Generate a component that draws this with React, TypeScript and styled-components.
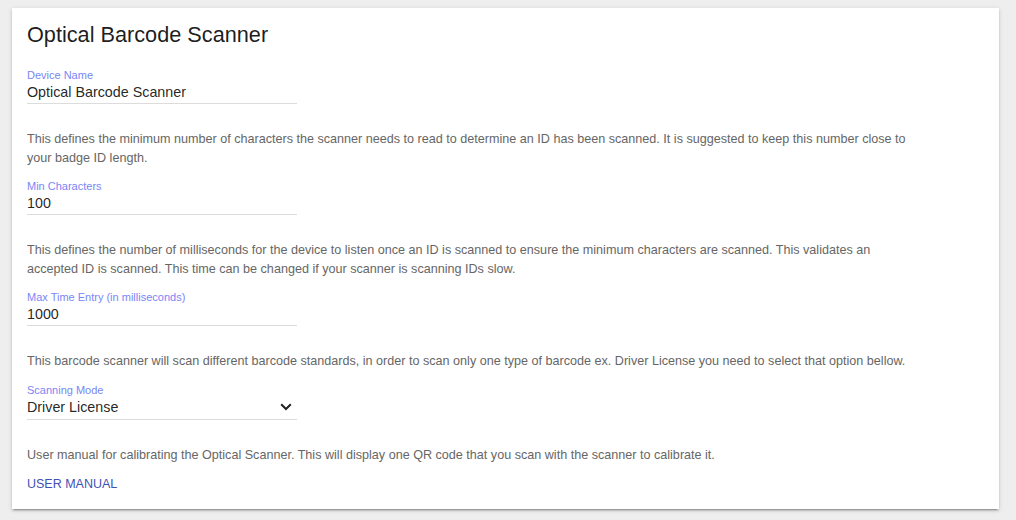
import React from 'react';
import styled, { createGlobalStyle } from 'styled-components';

const GlobalStyle = createGlobalStyle`
  html, body {
    margin: 0;
    padding: 0;
    background: #eeeeee;
  }
  body {
    font-family: "Liberation Sans", Arial, sans-serif;
  }
`;

const Page = styled.div`
  padding: 8px 17px 11px 12px;
`;

const Card = styled.section`
  background: #fff;
  padding: 14px 15px 17px;
  box-shadow: 0 3px 1px -2px rgba(0, 0, 0, 0.2), 0 2px 2px 0 rgba(0, 0, 0, 0.14),
    0 1px 5px 0 rgba(0, 0, 0, 0.12);
  display: flex;
  flex-direction: column;
  align-items: flex-start;
`;

const Title = styled.h2`
  margin: 0 0 20px;
  font-size: 21.7px;
  line-height: 26px;
  font-weight: 400;
  color: rgba(0, 0, 0, 0.9);
`;

const Field = styled.label<{ select?: boolean }>`
  display: flex;
  flex-direction: column;
  width: 270px;
  border-bottom: 1px solid #dcdcdc;
  padding-bottom: ${p => (p.select ? '3px' : '2px')};
  cursor: ${p => (p.select ? 'pointer' : 'text')};
`;

const FieldLabel = styled.span`
  font-size: 11px;
  line-height: 14px;
  color: #7986f7;
`;

const FieldValue = styled.div`
  display: flex;
  align-items: center;
  justify-content: space-between;
  padding-top: 2px;
  font-size: 14.3px;
  line-height: 17px;
  color: rgba(0, 0, 0, 0.87);
`;

const Chevron = styled.svg`
  margin-right: 5px;
  flex-shrink: 0;
`;

const Help = styled.p`
  margin: 26px 0 12px;
  max-width: 882px;
  font-size: 12.6px;
  line-height: 18.5px;
  color: #666;
`;

const LinkButton = styled.button`
  margin-top: 0;
  padding: 0;
  border: none;
  background: none;
  font-family: inherit;
  font-size: 12.5px;
  line-height: 16px;
  color: #3f51b5;
  text-transform: uppercase;
  cursor: pointer;
`;

const fields = [
  {
    label: 'Device Name',
    value: 'Optical Barcode Scanner',
    help:
      'This defines the minimum number of characters the scanner needs to read to determine an ID has been scanned. It is suggested to keep this number close to your badge ID length.',
  },
  {
    label: 'Min Characters',
    value: '100',
    help:
      'This defines the number of milliseconds for the device to listen once an ID is scanned to ensure the minimum characters are scanned. This validates an accepted ID is scanned. This time can be changed if your scanner is scanning IDs slow.',
  },
  {
    label: 'Max Time Entry (in milliseconds)',
    value: '1000',
    help:
      'This barcode scanner will scan different barcode standards, in order to scan only one type of barcode ex. Driver License you need to select that option bellow.',
  },
];

export default function App() {
  return (
    <>
      <GlobalStyle />
      <Page>
        <Card>
          <Title>Optical Barcode Scanner</Title>
          {fields.map(f => (
            <React.Fragment key={f.label}>
              <Field>
                <FieldLabel>{f.label}</FieldLabel>
                <FieldValue>{f.value}</FieldValue>
              </Field>
              <Help>{f.help}</Help>
            </React.Fragment>
          ))}
          <Field select>
            <FieldLabel>Scanning Mode</FieldLabel>
            <FieldValue>
              Driver License
              <Chevron width="12" height="8" viewBox="0 0 12 8">
                <path d="M1.2 1.3 L6 6 L10.8 1.3" fill="none" stroke="#222" strokeWidth="2" />
              </Chevron>
            </FieldValue>
          </Field>
          <Help>
            User manual for calibrating the Optical Scanner. This will display one QR code that you scan with
            the scanner to calibrate it.
          </Help>
          <LinkButton>User Manual</LinkButton>
        </Card>
      </Page>
    </>
  );
}
